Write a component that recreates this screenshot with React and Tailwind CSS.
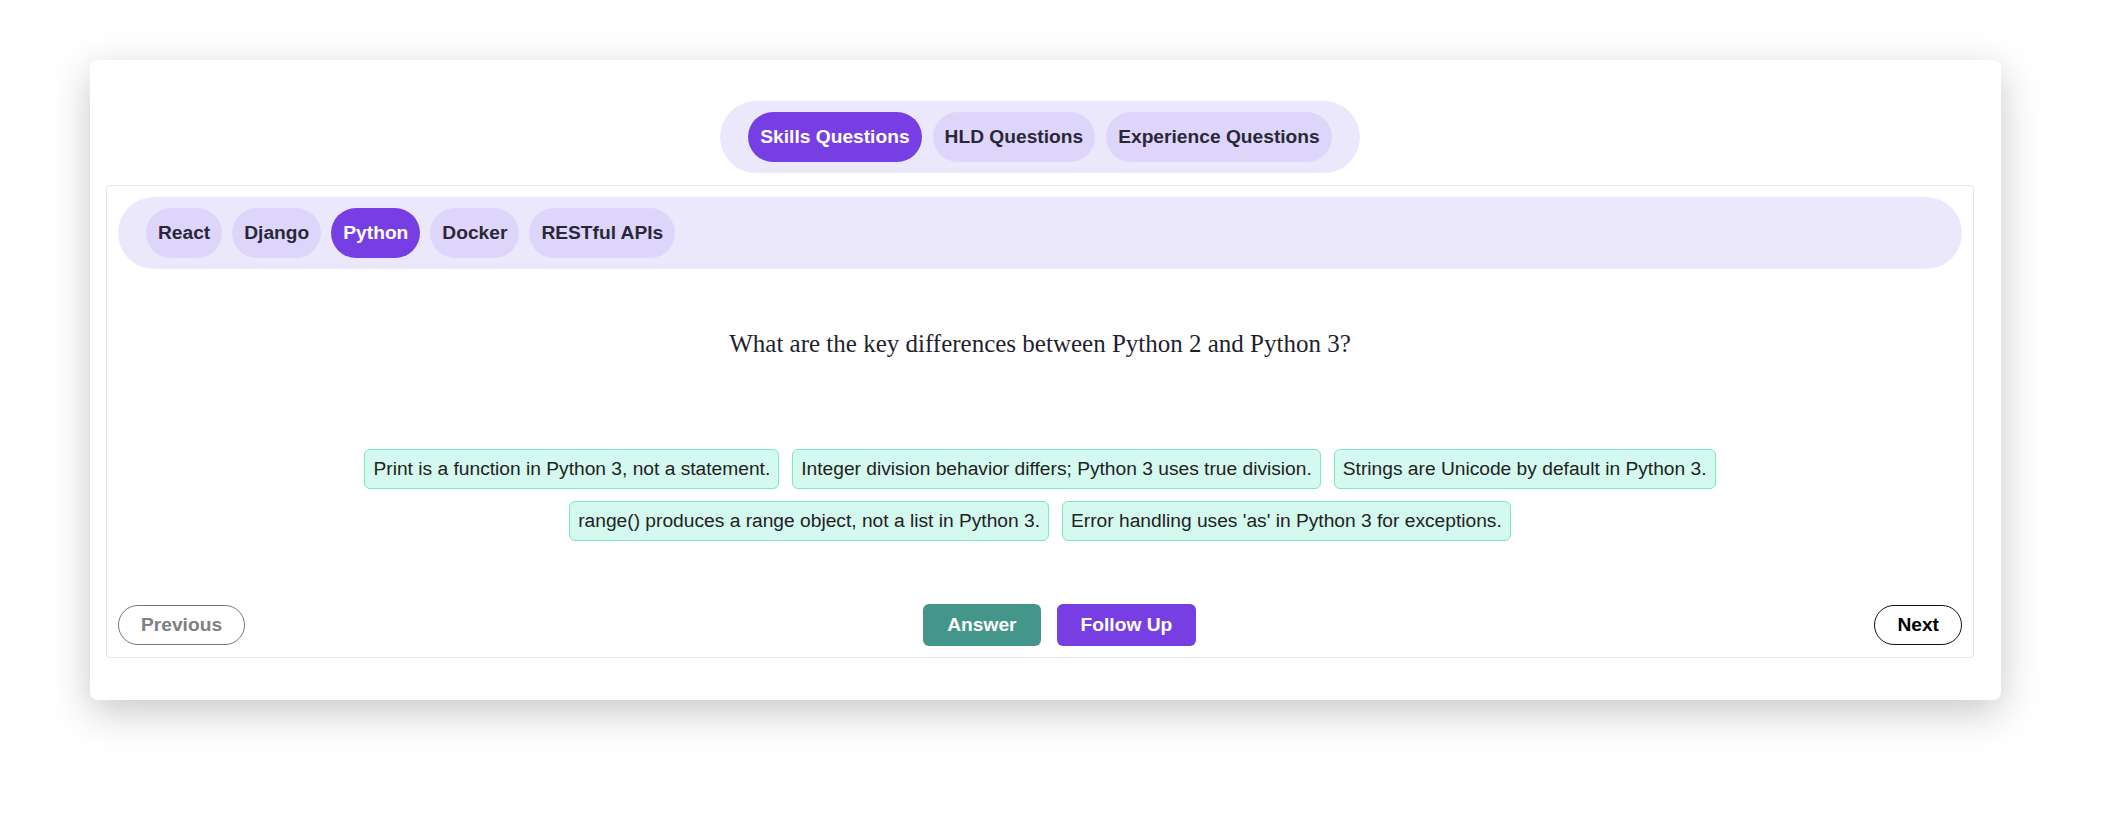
import { useState } from 'react';

const TOP_TABS = ['Skills Questions', 'HLD Questions', 'Experience Questions'];
const SKILLS = ['React', 'Django', 'Python', 'Docker', 'RESTful APIs'];
const POINTS = [
  'Print is a function in Python 3, not a statement.',
  'Integer division behavior differs; Python 3 uses true division.',
  'Strings are Unicode by default in Python 3.',
  'range() produces a range object, not a list in Python 3.',
  "Error handling uses 'as' in Python 3 for exceptions.",
];

function Pill({ label, active, onClick }) {
  return (
    <button
      onClick={onClick}
      className={`h-[50px] px-3 rounded-full text-[19.2px] font-bold flex items-center ${
        active ? 'bg-[#773fe3] text-white' : 'bg-[#ddd6fa] text-[#2a2838]'
      }`}
    >
      {label}
    </button>
  );
}

export default function App() {
  const [tab, setTab] = useState('Skills Questions');
  const [skill, setSkill] = useState('Python');

  return (
    <div className="min-h-screen bg-white pt-[60px] pl-[90px] font-['Liberation_Sans',Arial,sans-serif]">
      {/* Card */}
      <div className="w-[1911px] bg-white rounded-lg shadow-[0_12px_40px_rgba(0,0,0,0.22)] pt-[41px] pb-[42px] pl-4 pr-[27px]">
        {/* Top tabs */}
        <div className="flex justify-center">
          <div className="flex gap-[11px] bg-[#ece8fc] rounded-full px-7 py-[11px]">
            {TOP_TABS.map(t => (
              <Pill key={t} label={t} active={t === tab} onClick={() => setTab(t)} />
            ))}
          </div>
        </div>

        {/* Inner box */}
        <div className="mt-3 border border-[#e4e4e7] rounded p-[11px]">
          {/* Skill tabs */}
          <div className="flex gap-[10px] bg-[#ece8fc] rounded-full px-7 py-[11px]">
            {SKILLS.map(s => (
              <Pill key={s} label={s} active={s === skill} onClick={() => setSkill(s)} />
            ))}
          </div>

          {/* Question */}
          <p className="mt-[60px] text-center text-[25px] leading-[29px] text-[#1f1f2e] font-['Liberation_Serif','Times_New_Roman',serif]">
            What are the key differences between Python 2 and Python 3?
          </p>

          {/* Key points */}
          <div className="mt-[91px] px-8 flex flex-wrap justify-center gap-x-[13px] gap-y-3">
            {POINTS.map(p => (
              <span
                key={p}
                className="px-2 py-2 leading-[22px] text-[19.2px] text-[#222] bg-[#d4f9ef] border border-[#80e3cd] rounded-md"
              >
                {p}
              </span>
            ))}
          </div>

          {/* Actions */}
          <div className="mt-[63px] flex items-center justify-between">
            <button className="h-10 px-[22px] rounded-full border border-[#777] bg-white text-[19.2px] font-bold text-[#808080]">
              Previous
            </button>
            <div className="flex gap-4">
              <button className="h-[42px] px-6 rounded-md bg-[#44968a] text-white text-[19.2px] font-bold">
                Answer
              </button>
              <button className="h-[42px] px-6 rounded-md bg-[#773fe3] text-white text-[19.2px] font-bold">
                Follow Up
              </button>
            </div>
            <button className="h-10 px-[22px] rounded-full border border-[#111] bg-white text-[19.2px] font-bold text-black">
              Next
            </button>
          </div>
        </div>
      </div>
    </div>
  );
}
